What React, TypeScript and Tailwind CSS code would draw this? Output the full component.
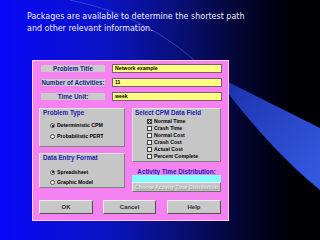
import React from "react";

const F = "font-['Liberation_Sans',Arial,sans-serif]";

function Radio({ on, label }: { on?: boolean; label: string }) {
  return (
    <div className="flex items-center h-[10px] pl-[10px]">
      <div className="w-[5px] h-[5px] rounded-full bg-white border border-[#505050] flex items-center justify-center shrink-0">
        {on && <div className="w-[2px] h-[2px] rounded-full bg-black" />}
      </div>
      <span className="ml-[2px] text-[5.2px] leading-[7px] font-bold text-black whitespace-nowrap">{label}</span>
    </div>
  );
}

function Check({ on, label }: { on?: boolean; label: string }) {
  return (
    <div className="flex items-center h-[7px] pl-[14px]">
      <div className="w-[5px] h-[5px] bg-white border border-[#404040] shrink-0 relative">
        {on && (
          <svg className="absolute inset-0" width="3" height="3" viewBox="0 0 3 3">
            <path d="M0 0L3 3M3 0L0 3" stroke="#000" strokeWidth="0.9" />
          </svg>
        )}
      </div>
      <span className="ml-[2px] text-[5.2px] leading-[7px] font-bold text-black whitespace-nowrap">{label}</span>
    </div>
  );
}

function Row({ label, value }: { label: string; value: string }) {
  return (
    <div className="flex items-center h-[9px] pl-[8px]">
      <div className="w-[64px] h-[7px] bg-[#cacaca] flex items-center justify-center">
        <span className="text-[6.3px] leading-[7px] font-bold text-[#1c1c90] whitespace-nowrap">{label}</span>
      </div>
      <div className="ml-[7px] w-[110px] h-[9px] bg-[#ffff80] border border-[#7a5a7a] flex items-center pl-[2px]">
        <span className="text-[5.2px] leading-[7px] font-bold text-black whitespace-nowrap">{value}</span>
      </div>
    </div>
  );
}

function Btn({ label, w }: { label: string; w: string }) {
  return (
    <div className={`${w} h-[14px] bg-[#c8c8c8] border border-t-[#eeeeee] border-l-[#eeeeee] border-b-[#505050] border-r-[#505050] flex items-center justify-center`}>
      <span className="text-[6px] leading-[7px] font-bold text-[#303030]">{label}</span>
    </div>
  );
}

export default function App() {
  return (
    <div className="relative w-[320px] h-[240px] overflow-hidden bg-[linear-gradient(90deg,#0808f8_0%,#0a14c4_33%,#08107a_55%,#030632_75%,#000008_90%,#000000_100%)]">
      <svg className="absolute inset-0" width="320" height="240" viewBox="0 0 320 240">
        <defs>
          <linearGradient id="beam" x1="214" y1="75" x2="320" y2="170" gradientUnits="userSpaceOnUse">
            <stop offset="0" stopColor="#1a2ea8" />
            <stop offset="1" stopColor="#3358e0" />
          </linearGradient>
          <linearGradient id="shade" x1="0" y1="0" x2="0" y2="240" gradientUnits="userSpaceOnUse">
            <stop offset="0" stopColor="#000000" stopOpacity="0" />
            <stop offset="1" stopColor="#000000" stopOpacity="0" />
          </linearGradient>
        </defs>
        <path d="M214 75 L320 128 L320 190 Q270 150 214 75 Z" fill="url(#beam)" />
        <path d="M70 0 Q150 16 205 70" stroke="#5a78ff" strokeOpacity="0.45" strokeWidth="1" fill="none" />
      </svg>
      <div className="relative">
        <div className="pl-[27px] pt-[11px] text-[8px] leading-[12px] text-[#ececf8] font-['DejaVu_Sans',sans-serif]">
          <div>Packages are available to determine the shortest path</div>
          <div>and other relevant information.</div>
        </div>
        <div className={`ml-[32px] mt-[25px] w-[197px] h-[161px] bg-[#f482f0] border border-[#ffd0ff] flex flex-col ${F}`}>
          <div className="pt-[3px] flex flex-col gap-[5px]">
            <Row label="Problem Title" value="Network example" />
            <Row label="Number of Activities:" value="11" />
            <Row label="Time Unit:" value="week" />
          </div>
          <div className="mt-[7px] pl-[6px] flex items-start gap-[7px]">
            <div className="w-[86px] flex flex-col gap-[6px]">
              <div className="h-[39px] bg-[#c6c6c6] border border-t-[#e0e0e0] border-l-[#e0e0e0] border-b-[#808080] border-r-[#808080] pl-[3px]">
                <div className="h-[7px] text-[6.3px] leading-[7px] font-bold text-[#2020b0]">Problem Type</div>
                <div className="mt-[4px] -ml-[3px]">
                  <div className="h-[11px] flex items-center"><Radio on label="Deterministic CPM" /></div>
                  <div className="h-[11px] flex items-center"><Radio label="Probabilistic PERT" /></div>
                </div>
              </div>
              <div className="h-[35px] bg-[#c6c6c6] border border-t-[#e0e0e0] border-l-[#e0e0e0] border-b-[#808080] border-r-[#808080] pl-[3px]">
                <div className="h-[7px] text-[6.3px] leading-[7px] font-bold text-[#2020b0]">Data Entry Format</div>
                <div className="mt-[6px] -ml-[3px]">
                  <Radio on label="Spreadsheet" />
                  <Radio label="Graphic Model" />
                </div>
              </div>
            </div>
            <div className="w-[89px] flex flex-col">
              <div className="h-[54px] bg-[#c6c6c6] border border-t-[#e0e0e0] border-l-[#e0e0e0] border-b-[#808080] border-r-[#808080]">
                <div className="pl-[2px] h-[7px] text-[6.3px] leading-[7px] font-bold text-[#2020b0] whitespace-nowrap">Select CPM Data Field</div>
                <div className="mt-[2px]">
                  <Check on label="Normal Time" />
                  <Check label="Crash Time" />
                  <Check label="Normal Cost" />
                  <Check label="Crash Cost" />
                  <Check label="Actual Cost" />
                  <Check label="Percent Complete" />
                </div>
              </div>
              <div className="h-[13px] pt-[6px] text-center text-[6.3px] leading-[7px] font-bold text-[#2020b0] whitespace-nowrap">Activity Time Distribution:</div>
              <div className="h-[7px] bg-[#80ffff]" />
              <div className="h-[10px] bg-[#c4c4c4] border border-t-[#eeeeee] border-l-[#eeeeee] border-b-[#707070] border-r-[#707070] flex items-center justify-center">
                <span className="text-[5.2px] leading-[7px] font-bold text-[#e4e4e4] whitespace-nowrap [text-shadow:0.5px_0.5px_0_#909090]">Choose Activity Time Distribution</span>
              </div>
            </div>
          </div>
          <div className="mt-[8px] pl-[6px] flex items-center">
            <Btn label="OK" w="w-[54px]" />
            <div className="ml-[10px]"><Btn label="Cancel" w="w-[53px]" /></div>
            <div className="ml-[11px]"><Btn label="Help" w="w-[54px]" /></div>
          </div>
        </div>
      </div>
    </div>
  );
}
